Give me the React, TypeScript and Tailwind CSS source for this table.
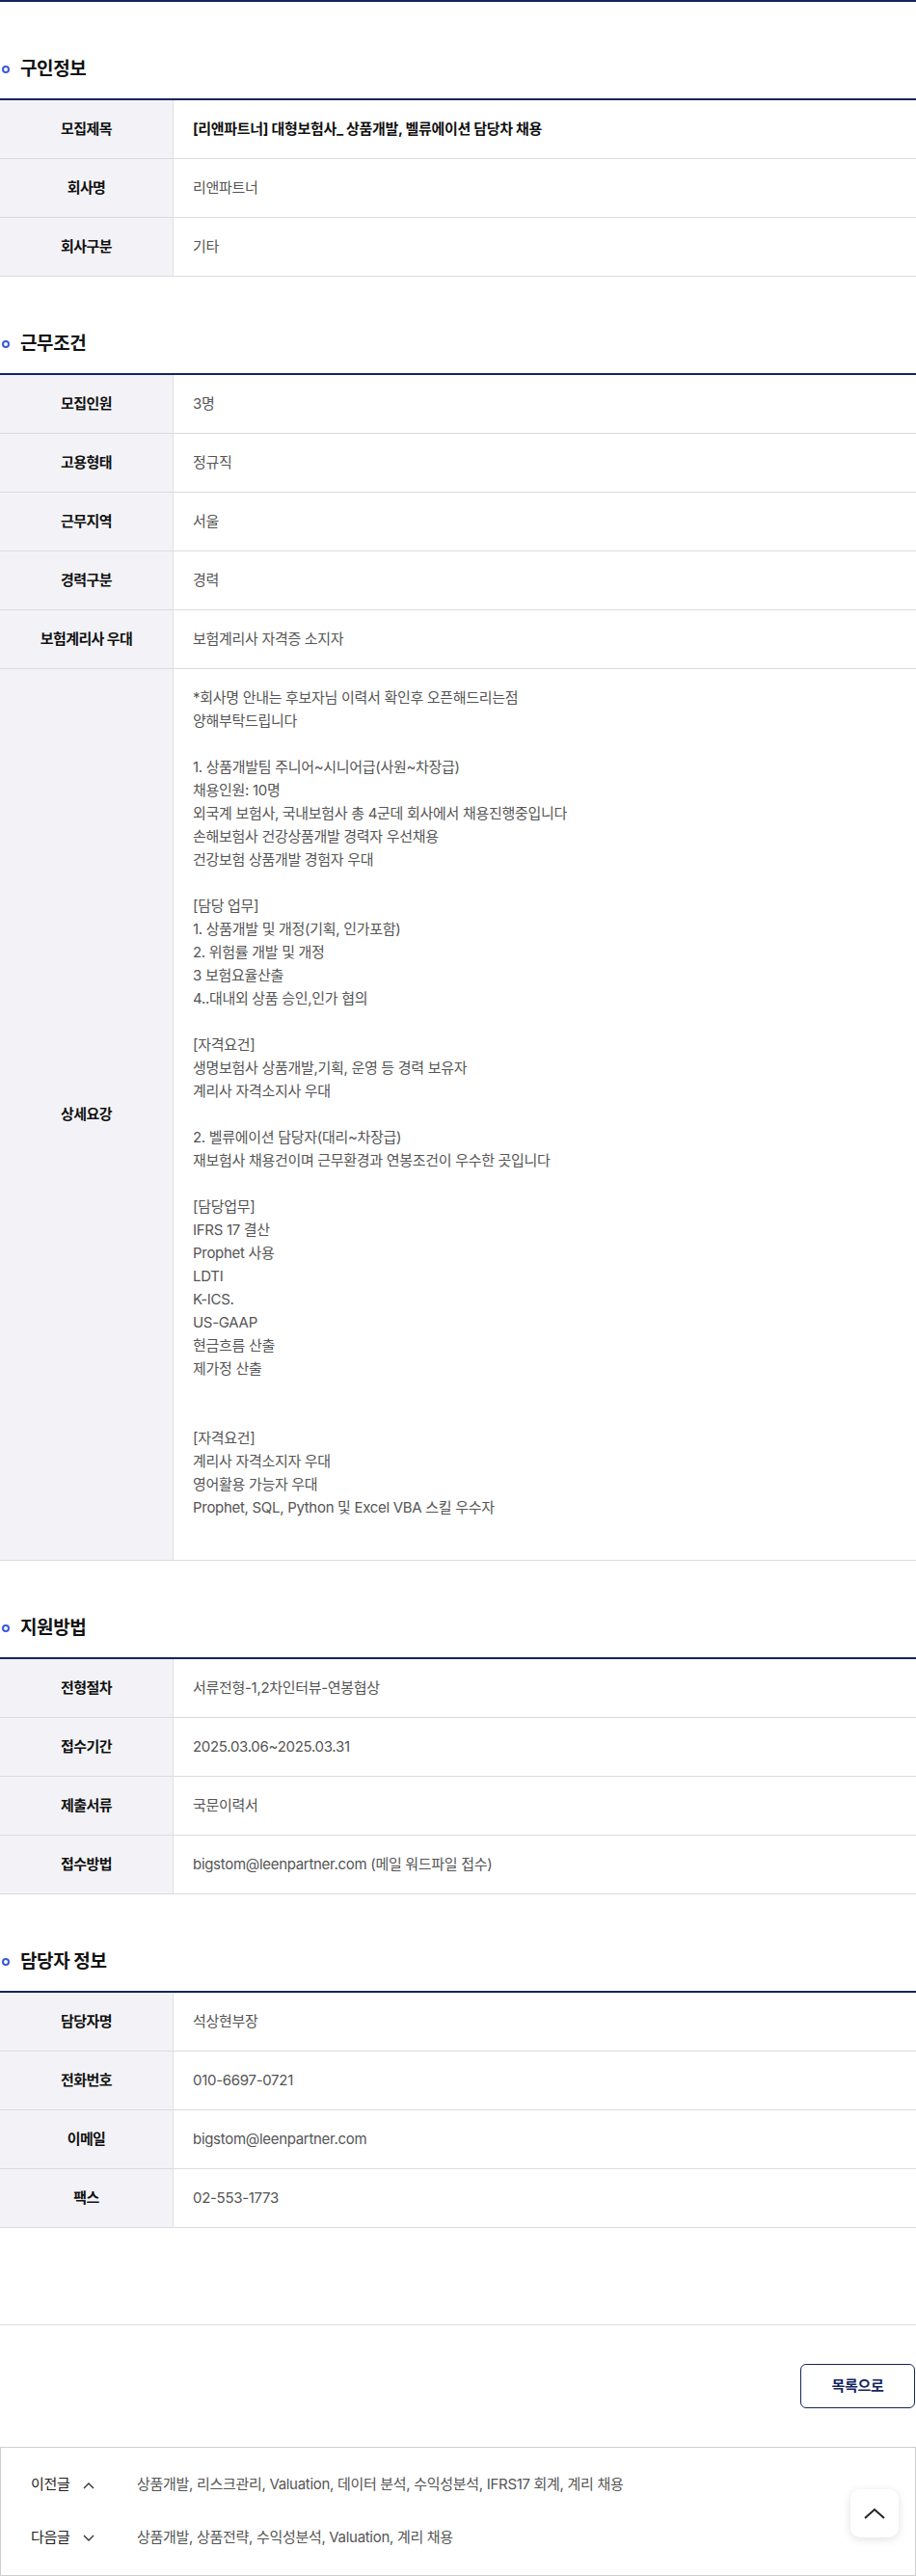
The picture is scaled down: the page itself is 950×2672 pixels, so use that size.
import React from 'react';

type Row = { label: string; value: React.ReactNode; strong?: boolean };

const detailLines = [
  '*회사명 안내는 후보자님 이력서 확인후 오픈해드리는점',
  '양해부탁드립니다',
  '',
  '1. 상품개발팀 주니어~시니어급(사원~차장급)',
  '채용인원: 10명',
  '외국계 보험사, 국내보험사 총 4군데 회사에서 채용진행중입니다',
  '손해보험사 건강상품개발 경력자 우선채용',
  '건강보험 상품개발 경험자 우대',
  '',
  '[담당 업무]',
  '1. 상품개발 및 개정(기획, 인가포함)',
  '2. 위험률 개발 및 개정',
  '3 보험요율산출',
  '4..대내외 상품 승인,인가 협의',
  '',
  '[자격요건]',
  '생명보험사 상품개발,기획, 운영 등 경력 보유자',
  '계리사 자격소지사 우대',
  '',
  '2. 벨류에이션 담당자(대리~차장급)',
  '재보험사 채용건이며 근무환경과 연봉조건이 우수한 곳입니다',
  '',
  '[담당업무]',
  'IFRS 17 결산',
  'Prophet 사용',
  'LDTI',
  'K-ICS.',
  'US-GAAP',
  '현금흐름 산출',
  '제가정 산출',
  '',
  '',
  '[자격요건]',
  '계리사 자격소지자 우대',
  '영어활용 가능자 우대',
  'Prophet, SQL, Python 및 Excel VBA 스킬 우수자',
  '',
];

const sections: { title: string; rows: Row[] }[] = [
  {
    title: '구인정보',
    rows: [
      { label: '모집제목', value: '[리앤파트너] 대형보험사_ 상품개발, 벨류에이션 담당차 채용', strong: true },
      { label: '회사명', value: '리앤파트너' },
      { label: '회사구분', value: '기타' },
    ],
  },
  {
    title: '근무조건',
    rows: [
      { label: '모집인원', value: '3명' },
      { label: '고용형태', value: '정규직' },
      { label: '근무지역', value: '서울' },
      { label: '경력구분', value: '경력' },
      { label: '보험계리사 우대', value: '보험계리사 자격증 소지자' },
      {
        label: '상세요강',
        value: (
          <div>
            {detailLines.map((line, i) => (
              <p key={i} className="h-6">{line}</p>
            ))}
          </div>
        ),
      },
    ],
  },
  {
    title: '지원방법',
    rows: [
      { label: '전형절차', value: '서류전형-1,2차인터뷰-연봉협상' },
      { label: '접수기간', value: '2025.03.06~2025.03.31' },
      { label: '제출서류', value: '국문이력서' },
      { label: '접수방법', value: 'bigstom@leenpartner.com (메일 워드파일 접수)' },
    ],
  },
  {
    title: '담당자 정보',
    rows: [
      { label: '담당자명', value: '석상현부장' },
      { label: '전화번호', value: '010-6697-0721' },
      { label: '이메일', value: 'bigstom@leenpartner.com' },
      { label: '팩스', value: '02-553-1773' },
    ],
  },
];

const Section = ({ title, rows }: { title: string; rows: Row[] }) => (
  <section className="pt-[56px]">
    <h2 className="flex items-center h-[28px] mb-[16px]">
      <span className="w-[8px] h-[8px] rounded-full border-2 border-[#3a5bd9] ml-[2px] mr-[11px]"></span>
      <span className="text-[19px] font-bold text-[#111] tracking-[-0.4px]">{title}</span>
    </h2>
    <div className="border-t-2 border-[#15255e]">
      {rows.map((row) => (
        <div key={row.label} className="grid grid-cols-[180px_1fr] border-b border-[#dcdcdc]">
          <div className="bg-[#f3f3f7] border-r border-[#e0e0e0] flex items-center justify-center text-[15px] font-bold text-[#111] tracking-[-0.6px]">
            {row.label}
          </div>
          <div
            className={`px-5 py-[18px] leading-6 text-[15px] tracking-[-0.3px] ${
              row.strong ? 'font-bold text-[#111]' : 'text-[#555]'
            }`}
          >
            {row.value}
          </div>
        </div>
      ))}
    </div>
  </section>
);

const Chevron = ({ up }: { up?: boolean }) => (
  <svg width="12" height="8" viewBox="0 0 12 8" fill="none" stroke="#333" strokeWidth="1.4">
    {up ? <polyline points="1,7 6,2 11,7" /> : <polyline points="1,1 6,6 11,1" />}
  </svg>
);

export default function App() {
  return (
    <div
      className="w-[950px] bg-white border-t-2 border-[#15255e]"
      style={{ fontFamily: 'Inter, "Noto Sans CJK KR", sans-serif' }}
    >
      {sections.map((s) => (
        <Section key={s.title} title={s.title} rows={s.rows} />
      ))}

      <div className="mt-[100px] border-t border-[#dcdcdc] pt-[40px] pb-[40px] flex justify-end pr-[1px]">
        <button className="w-[119px] h-[46px] border border-[#15255e] rounded-[6px] text-[15px] font-bold text-[#15255e] tracking-[-0.3px]">
          목록으로
        </button>
      </div>

      <div className="relative border border-[#cfcfcf] py-[11px]">
        <div className="flex items-center h-[55px] pl-[31px]">
          <span className="text-[15px] text-[#222] tracking-[-0.3px] w-[54px]">이전글</span>
          <Chevron up />
          <span className="ml-[44px] text-[15px] text-[#555] tracking-[-0.3px]">
            상품개발, 리스크관리, Valuation, 데이터 분석, 수익성분석, IFRS17 회계, 계리 채용
          </span>
        </div>
        <div className="flex items-center h-[55px] pl-[31px]">
          <span className="text-[15px] text-[#222] tracking-[-0.3px] w-[54px]">다음글</span>
          <Chevron />
          <span className="ml-[44px] text-[15px] text-[#555] tracking-[-0.3px]">
            상품개발, 상품전략, 수익성분석, Valuation, 계리 채용
          </span>
        </div>
        <button className="absolute top-[43px] right-[17px] w-[50px] h-[50px] rounded-[10px] bg-white shadow-[0_2px_10px_rgba(0,0,0,0.12)] flex items-center justify-center">
          <svg width="22" height="12" viewBox="0 0 22 12" fill="none" stroke="#222" strokeWidth="2">
            <polyline points="1,11 11,2 21,11" />
          </svg>
        </button>
      </div>
    </div>
  );
}
